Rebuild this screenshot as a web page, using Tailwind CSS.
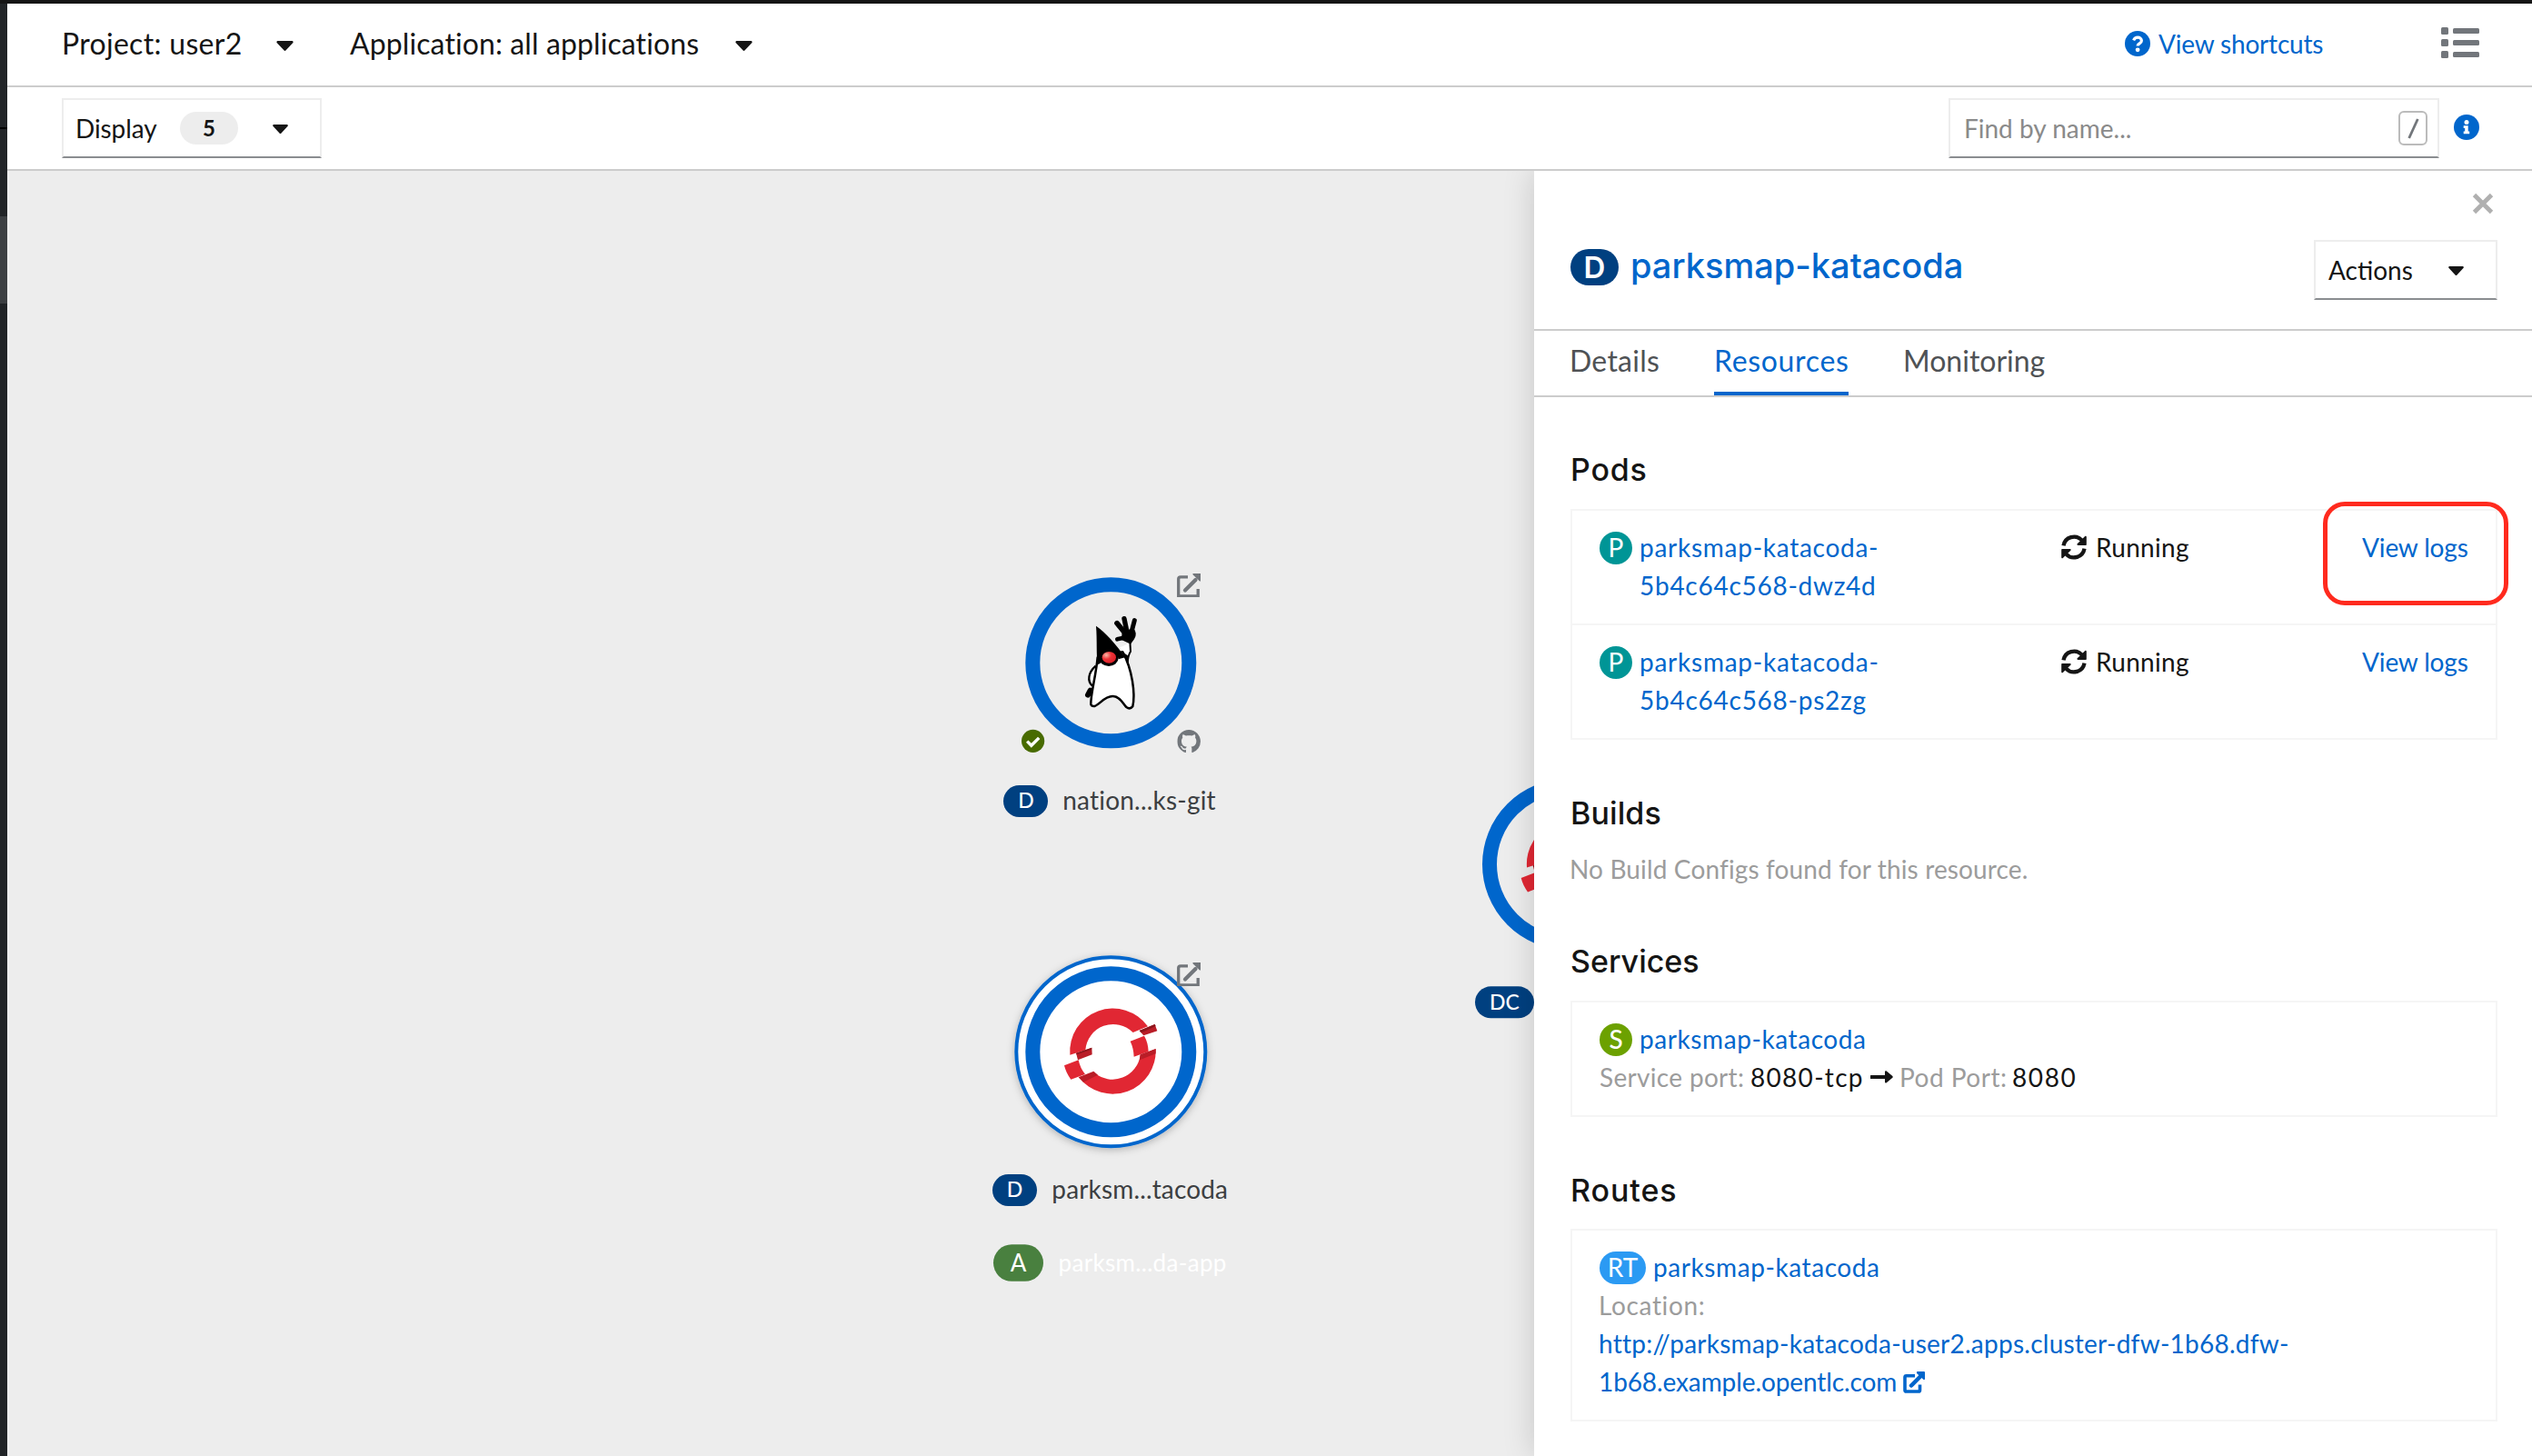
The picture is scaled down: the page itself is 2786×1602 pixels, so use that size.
<!DOCTYPE html>
<html lang="en">
<head>
<meta charset="utf-8">
<title>Topology</title>
<script src="https://cdn.jsdelivr.net/npm/@tailwindcss/browser@4"></script>
</head>
<body class="h-[1602px] w-[2786px] overflow-hidden bg-white font-['Lato','Liberation_Sans',sans-serif] text-[28px] leading-[42px] text-[#151515]">
<svg class="hidden">
  <symbol id="caret" viewBox="0 0 20 12"><path d="M1.6 0h16.8c1.4 0 2.1 1.5 1.1 2.5l-8.3 8.8c-.7.8-1.7.8-2.4 0L.5 2.5C-.5 1.5.200 0 1.600 0z" fill="currentColor"/></symbol>
  <symbol id="sync" viewBox="0 0 28 28">
    <g fill="none" stroke="currentColor" stroke-width="4.300"><path d="M2.500 12.400A11.700 11.700 0 0 1 22.600 6.400"/><path d="M25.500 15.600A11.700 11.700 0 0 1 5.400 21.600"/></g>
    <path d="M27.800 2.800v8.200c0 .6-.4 1-1 1h-8.400c-1 0-1.400-1-.7-1.700l8.500-8.300c.6-.6 1.600-.1 1.600.8zM.2 25.200V17c0-.6.4-1 1-1h8.400c1 0 1.400 1 .7 1.700L1.800 26c-.6.600-1.600.1-1.600-.8z" fill="currentColor"/>
  </symbol>
  <symbol id="external" viewBox="0 0 26 26">
    <path d="M12 3.800H4Q1.700 3.800 1.700 6v19h21.500v-8" fill="none" stroke="currentColor" stroke-width="3.300"/>
    <path d="M9 18.500L20.500 7" fill="none" stroke="currentColor" stroke-width="4.200" stroke-linecap="round"/>
    <path d="M17.500 0H26v8.500h-1L17.500 1.200z" fill="currentColor"/>
  </symbol>
  <symbol id="openshift" viewBox="0 0 960 764" overflow="visible">
    <g fill="#e12733">
      <path d="M352 392A142 142 0 0 1 609 298L560 318A92 92 0 0 0 403 376Z"/>
      <path d="M635 372A142 142 0 0 1 381 466L432 450A92 92 0 0 0 584 392Z"/>
      <path d="M333 427L380 409Q385 435 402 456L355 473Q339 452 333 427Z"/>
      <path d="M551 347L597 329Q610 352 611 381L563 398Q562 370 551 347Z"/>
    </g>
    <g fill="#b91d27">
      <path d="M372 386L424 368L425 391L378 409Z"/>
      <path d="M380 466L430 446L444 458L396 482Z"/>
      <path d="M584 391L635 372L635 388L582 409Z"/>
      <path d="M581 312L632 291L640 313L595 328Z"/>
    </g>
    <g fill="#8b161d">
      <path d="M372 386L424 368L423 374L374 391Z"/>
      <path d="M581 312L632 291L635 297L587 319Z"/>
    </g>
  </symbol>
</svg>

<div class="flex h-full flex-col">
  <div class="h-1 shrink-0 bg-[#151515]"></div>
  <div class="flex min-h-0 flex-1">
    <!-- edge of the navigation -->
    <nav class="flex w-2 shrink-0 flex-col bg-[#212427]">
      <div class="mt-[136px] h-[2px] bg-black"></div>
      <div class="mt-24 h-24 bg-[#3c3f42]"></div>
    </nav>

    <div class="flex min-w-0 flex-1 flex-col">
      <header class="flex h-[92px] shrink-0 items-center border-b-2 border-[#ccc] pr-[58px] pl-[60px]">
        <div class="flex items-center pb-[3px] text-[32px] leading-[48px] whitespace-nowrap">
          <span class="w-[236px] tracking-[0.3px]">Project: user2</span>
          <svg class="mt-[5px] h-[11px] w-[19px]"><use href="#caret"/></svg>
          <span class="ml-[62px] w-[424px] tracking-[0.1px]">Application: all applications</span>
          <svg class="mt-[5px] h-[11px] w-[19px]"><use href="#caret"/></svg>
        </div>
        <a class="ml-auto flex items-center whitespace-nowrap text-[#06c]">
          <svg class="mr-[9px] mb-[3px] h-7 w-7" viewBox="0 0 28 28"><circle cx="14" cy="14" r="14" fill="currentColor"/><path d="M9.600 10.400C10.600 8.200 12.100 7.200 14.200 7.200c2.300 0 4.200 1.500 4.200 3.500 0 3.300-4.300 3-4.300 5.800" fill="none" stroke="#fff" stroke-width="3.200"/><circle cx="14.100" cy="20.800" r="2.400" fill="#fff"/></svg>
          <span class="mr-32 w-[183px] -translate-y-px tracking-[-0.180px]">View shortcuts</span>
        </a>
        <svg class="mb-[4px] h-[34px] w-[42px] text-[#72767b]" viewBox="0 0 42 34" fill="currentColor"><rect width="8" height="8" rx="1.500"/><rect y="13" width="8" height="8" rx="1.500"/><rect y="26" width="8" height="8" rx="1.500"/><rect x="13" y="1" width="29" height="6" rx="1.500"/><rect x="13" y="14" width="29" height="6" rx="1.500"/><rect x="13" y="27" width="29" height="6" rx="1.500"/></svg>
      </header>

      <div class="flex h-[92px] shrink-0 items-center justify-between border-b-2 border-[#ccc] pr-[58px] pl-[60px]">
        <div class="flex h-[66px] w-[286px] items-center border-2 border-[#ededed] border-b-[#8a8d90] pl-[13px]">
          <span class="w-[115px] tracking-[-0.1px]">Display</span>
          <span class="flex h-9 w-16 items-center justify-center rounded-full bg-[#ededed] text-[24px] leading-[36px] font-bold">5</span>
          <svg class="mt-[2px] ml-[38px] h-[10px] w-[17px]"><use href="#caret"/></svg>
        </div>
        <div class="flex items-center">
          <div class="flex h-[66px] w-[540px] items-center justify-between border-2 border-[#ededed] border-b-[#8a8d90] pr-[11px] pl-[15px]">
            <span class="text-[#8a8a8a]">Find by name...</span>
            <span class="flex h-[38px] w-8 items-center justify-center rounded-md border-2 border-[#bbb] text-[#72767b]"><svg class="h-[23px] w-[13px]" viewBox="0 0 13 23"><path d="M11.300 1L1.700 22" stroke="currentColor" stroke-width="2.800"/></svg></span>
          </div>
          <svg class="mb-[2px] ml-4 h-7 w-7 text-[#06c]" viewBox="0 0 28 28"><circle cx="14" cy="14" r="14" fill="currentColor"/><circle cx="14" cy="8.600" r="2.500" fill="#fff"/><path d="M10.700 12.200h5v6.200h1.500v2.800h-6.500v-2.800h1.500V15h-1.500z" fill="#fff"/></svg>
        </div>
      </div>

      <main class="flex min-h-0 flex-1 overflow-hidden">
        <!-- topology graph -->
        <svg class="h-[1414px] w-[1680px] shrink-0 bg-[#ededed]" viewBox="8 188 1680 1414">
          <defs>
            <radialGradient id="nose" cx=".3" cy=".3" r=".8"><stop offset="0" stop-color="#fbb8a8"/><stop offset=".45" stop-color="#ee3338"/><stop offset="1" stop-color="#d81f26"/></radialGradient>
            <filter id="lift" x="-20%" y="-20%" width="140%" height="140%"><feDropShadow dx="0" dy="2" stdDeviation="4" flood-color="#000" flood-opacity=".25"/></filter>
          </defs>

          <!-- nationalparks -->
          <circle cx="1222.300" cy="729.300" r="86" fill="none" stroke="#06c" stroke-width="16"/>
          <g transform="translate(1160 660) scale(.3333)">
            <path d="M137 218C112 240 108 268 126 284" fill="#fff" stroke="#000" stroke-width="7"/>
            <path d="M119 299L111 314" stroke="#000" stroke-width="18" stroke-linecap="round"/>
            <path d="M216 156Q236 152 246 140L252 146V172Q248 186 239 192Z" fill="#fff"/>
            <path d="M250 138L252 170Q242 186 242 212" fill="none" stroke="#000" stroke-width="6"/>
            <path d="M225 172L246 186L243 214L234 200Z"/>
            <path d="M143 190C138 250 120 310 121 345Q123 352 133 351C150 346 165 318 193 318C218 318 228 345 238 354Q250 363 259 352C268 310 258 230 226 172Z" fill="#fff" stroke="#000" stroke-width="7.500" stroke-linejoin="round"/>
            <path d="M138 86C170 108 205 148 234 190L212 196Q208 170 185 172L155 208L144 214C138 190 142 130 138 86Z"/>
            <ellipse cx="180" cy="191" rx="32" ry="28"/>
            <ellipse cx="181" cy="190" rx="23" ry="19" fill="url(#nose)"/>
            <g stroke="#000" stroke-linecap="round" fill="none"><path d="M236 112L207 77" stroke-width="17"/><path d="M240 106L231 62" stroke-width="16"/><path d="M254 110L265 68" stroke-width="15"/><path d="M236 124L208 130" stroke-width="14"/></g>
            <path d="M224 104L262 94Q276 112 264 130L252 146L240 140L222 132Z"/>
          </g>
          <g transform="translate(1295 631)" class="text-[#72767b]"><use href="#external" width="26" height="26"/></g>
          <circle cx="1136.600" cy="815.300" r="12.600" fill="#486b00"/>
          <path d="M1130.200 815.600l4.600 4.700 8.400-8.400" fill="none" stroke="#fff" stroke-width="3.400"/>
          <svg x="1295.300" y="803" width="25.700" height="25" viewBox="0 0 16 15.600"><path fill="#72767b" d="M8 0C3.580 0 0 3.580 0 8c0 3.540 2.290 6.530 5.470 7.590.4.070.55-.17.55-.38 0-.19-.01-.82-.01-1.490-2.010.37-2.530-.49-2.690-.94-.09-.23-.48-.94-.82-1.130-.28-.15-.68-.52-.01-.53.63-.01 1.080.58 1.230.82.72 1.210 1.870.87 2.330.66.07-.52.28-.87.51-1.070-1.780-.2-3.640-.89-3.640-3.950 0-.87.31-1.590.82-2.150-.08-.2-.36-1.020.08-2.120 0 0 .67-.21 2.200.82.64-.18 1.320-.27 2-.27s1.360.09 2 .27c1.530-1.040 2.200-.82 2.200-.82.44 1.100.16 1.920.08 2.120.51.56.82 1.270.82 2.150 0 3.070-1.870 3.750-3.650 3.950.29.25.54.73.54 1.480 0 1.070-.01 1.930-.01 2.200 0 .21.15.46.55.38A8.010 8.010 0 0 0 16 8c0-4.420-3.580-8-8-8z"/></svg>
          <rect x="1104" y="864" width="49" height="35" rx="17.500" fill="#004080"/>
          <text x="1129" y="889" text-anchor="middle" fill="#fff" class="text-[23px] font-medium">D</text>
          <text x="1169.300" y="890.700" fill="#3c3f42" class="tracking-[0.2px]">nation...ks-git</text>

          <!-- parksmap, selected -->
          <circle cx="1222.300" cy="1157.300" r="104" fill="#fff" stroke="#06c" stroke-width="4" filter="url(#lift)"/>
          <circle cx="1222.300" cy="1157.300" r="86" fill="none" stroke="#06c" stroke-width="16"/>
          <use href="#openshift" x="1060" y="1030" width="320" height="254.700"/>
          <g transform="translate(1295 1059)" class="text-[#72767b]"><use href="#external" width="26" height="26"/></g>
          <rect x="1092" y="1292" width="49" height="35" rx="17.500" fill="#004080"/>
          <text x="1116.500" y="1317" text-anchor="middle" fill="#fff" class="text-[23px] font-medium">D</text>
          <text x="1157.300" y="1318.700" fill="#3c3f42" class="tracking-[0.150px]">parksm...tacoda</text>

          <!-- application group label -->
          <rect x="1093" y="1369.300" width="55" height="40.500" rx="20.200" fill="#49803f"/>
          <text x="1120.500" y="1398.500" text-anchor="middle" fill="#fff" class="text-[26px]">A</text>
          <text x="1164.500" y="1398.500" fill="#fff" class="text-[26px] tracking-[0.320px]">parksm...da-app</text>

          <!-- deployment config, partly under the side panel -->
          <circle cx="1725" cy="951" r="86" fill="none" stroke="#06c" stroke-width="16"/>
          <use href="#openshift" x="1562.700" y="823.700" width="320" height="254.700"/>
          <rect x="1623" y="1085.300" width="65" height="35" rx="17.500" fill="#004080"/>
          <text x="1655.500" y="1111" text-anchor="middle" fill="#fff" class="text-[23px] font-medium">DC</text>
        </svg>

        <!-- side panel -->
        <aside class="relative flex flex-1 flex-col bg-white shadow-[0_0_32px_rgba(0,0,0,0.17)]">
          <div class="h-[176px] shrink-0 border-b-2 border-[#ccc] pr-[38px] pl-10">
            <div class="flex justify-end pt-6 pr-1"><svg class="h-6 w-6 text-[#b0b0b0]" viewBox="0 0 24 24"><path d="M2.500 2.500l19 19M21.500 2.500l-19 19" stroke="currentColor" stroke-width="4.800"/></svg></div>
            <div class="mt-7 flex items-start">
              <span class="mt-[10px] flex h-10 w-[53px] items-center justify-center rounded-full bg-[#004080] font-['Inter',sans-serif] text-[33px] leading-10 font-semibold text-white">D</span>
              <h1 class="ml-[13px] font-['Inter',sans-serif] text-[38px] leading-[56px] font-medium whitespace-nowrap text-[#06c]">parksmap-katacoda</h1>
              <div class="ml-auto flex h-[66px] w-[202px] items-center border-2 border-[#ededed] border-b-[#8a8d90] pl-[14px]">
                <span class="w-[132px]">Actions</span>
                <svg class="mt-[2px] h-[10px] w-[17px]"><use href="#caret"/></svg>
              </div>
            </div>
          </div>
          <div class="flex h-[73px] shrink-0 items-stretch border-b-2 border-[#ccc] pl-[39px] text-[32px] leading-[48px] text-[#4f5255]">
            <span class="w-[159px] pt-[9px] tracking-[0.250px]">Details</span>
            <span class="w-[148px] border-b-4 border-[#06c] pt-[9px] tracking-[0.670px] text-[#06c]">Resources</span>
            <span class="ml-[60px] pt-[9px]">Monitoring</span>
          </div>

          <div class="px-10 pt-[58px] pr-[38px]">
            <h2 class="mb-[21px] font-['Inter',sans-serif] text-[34px] leading-[44px] font-medium tracking-[0.8px]">Pods</h2>
            <div class="border-2 border-[#f5f5f5]">
              <div class="relative grid grid-cols-[508px_331px_auto] border-b-2 border-[#f5f5f5] pt-[19px] pb-[21px] pl-[30px]">
                <div class="flex">
                  <span class="mt-1 mr-2 h-9 w-9 rounded-full bg-[#009596] text-center leading-[34px] text-white">P</span>
                  <a class="tracking-[0.730px] text-[#06c]">parksmap-katacoda-<br>5b4c64c568-dwz4d</a>
                </div>
                <div class="flex"><svg class="mt-[7px] mr-[10px] h-7 w-7"><use href="#sync"/></svg><span class="tracking-[0.3px]">Running</span></div>
                <a class="tracking-[-0.150px] text-[#06c]">View logs</a>
                <div class="absolute -top-[10px] -right-[14px] h-[114px] w-[204px] rounded-3xl border-[5px] border-[#ff2a1e]"></div>
              </div>
              <div class="grid grid-cols-[508px_331px_auto] pt-[19px] pb-[21px] pl-[30px]">
                <div class="flex">
                  <span class="mt-1 mr-2 h-9 w-9 rounded-full bg-[#009596] text-center leading-[34px] text-white">P</span>
                  <a class="tracking-[0.750px] text-[#06c]">parksmap-katacoda-<br>5b4c64c568-ps2zg</a>
                </div>
                <div class="flex"><svg class="mt-[7px] mr-[10px] h-7 w-7"><use href="#sync"/></svg><span class="tracking-[0.3px]">Running</span></div>
                <a class="tracking-[-0.150px] text-[#06c]">View logs</a>
              </div>
            </div>

            <h2 class="mt-[59px] mb-[18px] font-['Inter',sans-serif] text-[34px] leading-[44px] font-medium tracking-[0.1px]">Builds</h2>
            <p class="-ml-px tracking-[0.140px] text-[#9c9c9c]">No Build Configs found for this resource.</p>

            <h2 class="mt-[59px] mb-[21px] font-['Inter',sans-serif] text-[34px] leading-[44px] font-medium">Services</h2>
            <div class="border-2 border-[#f5f5f5] pt-[19px] pb-[21px] pl-[30px]">
              <div class="flex">
                <span class="mt-1 mr-2 h-9 w-9 rounded-full bg-[#6ca100] text-center leading-[34px] font-medium text-white">S</span>
                <a class="tracking-[0.580px] text-[#06c]">parksmap-katacoda</a>
              </div>
              <div class="flex">
                <span class="w-[166px] tracking-[0.320px] text-[#9c9c9c]">Service port:</span>
                <span class="w-[132px] tracking-[1.300px]">8080-tcp</span>
                <svg class="mt-[14px] mr-[7px] h-[14px] w-[25px]" viewBox="0 0 25 14"><path d="M.6 5H16V1.400c0-1 1.100-1.500 1.800-.8L24.400 6c.4.500.4 1.300 0 1.700l-6.600 5.500c-.7.700-1.800.2-1.800-.8V9H.6a.6.600 0 0 1-.6-.6V5.600A.6.600 0 0 1 .6 5z" fill="currentColor"/></svg>
                <span class="w-[124px] tracking-[0.5px] text-[#9c9c9c]">Pod Port:</span>
                <span class="tracking-[1.600px]">8080</span>
              </div>
            </div>

            <h2 class="mt-[59px] mb-[20px] font-['Inter',sans-serif] text-[34px] leading-[44px] font-medium tracking-[0.9px]">Routes</h2>
            <div class="border-2 border-[#f5f5f5] pt-[19px] pb-[21px] pl-[30px]">
              <div class="flex">
                <span class="mt-1 mr-2 h-9 w-[51px] rounded-full bg-[#2b9af3] text-center leading-[34px] text-white">RT</span>
                <a class="tracking-[0.580px] text-[#06c]">parksmap-katacoda</a>
              </div>
              <div class="-ml-px tracking-[0.650px] text-[#9c9c9c]">Location:</div>
              <a class="block whitespace-nowrap text-[#06c]"><span class="-ml-px tracking-[0.250px]">http://parksmap-katacoda-user2.apps.cluster-dfw-1b68.dfw-</span><br><span class="-ml-px tracking-[-0.1px]">1b68.example.opentlc.com</span><svg class="ml-[7px] inline-block h-6 w-6 align-[-2px]" viewBox="0 0 24 24"><path d="M13 4.700H3.600Q2 4.700 2 6.300V20.400Q2 22 3.600 22H16.900Q18.500 22 18.500 20.400V14.500" fill="none" stroke="currentColor" stroke-width="3.600"/><path d="M9 15.500L20 4.500" stroke="currentColor" stroke-width="4.500" stroke-linecap="round"/><path d="M15.500 0H23q1 0 1 1v7.500q-1 1-2 0L15 2q-.5-1.500.5-2z" fill="currentColor"/></svg></a>
            </div>
          </div>
        </aside>
      </main>
    </div>
  </div>
</div>
</body>
</html>
